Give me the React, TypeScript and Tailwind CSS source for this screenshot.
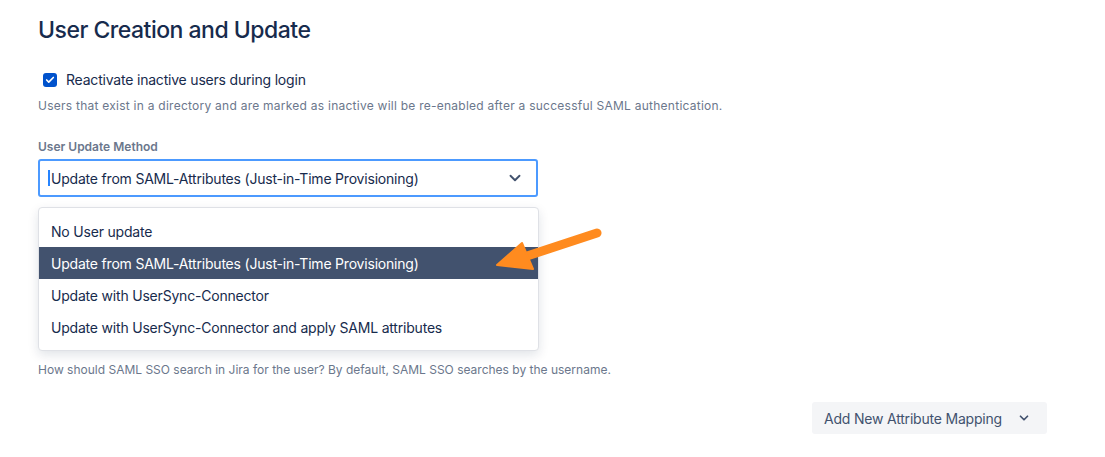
import { ChevronDown, Check } from "lucide-react";

const options = [
  "No User update",
  "Update from SAML-Attributes (Just-in-Time Provisioning)",
  "Update with UserSync-Connector",
  "Update with UserSync-Connector and apply SAML attributes",
];

export default function App() {
  const selected = 1;

  return (
    <div
      className="relative w-[1105px] h-[457px] bg-white text-[#172B4D] overflow-hidden"
      style={{ fontFamily: "Inter, 'Liberation Sans', sans-serif" }}
    >
      <div className="pl-[38px] pt-[15px]">
        <h1 className="text-[23px] leading-[30px] font-medium tracking-[-0.5px]">
          User Creation and Update
        </h1>

        <label className="mt-[25px] flex items-center h-[20px] pl-[5px]">
          <span className="w-[14px] h-[14px] rounded-[3px] bg-[#0052CC] flex items-center justify-center">
            <Check className="w-[10px] h-[10px] text-white" strokeWidth={4} />
          </span>
          <span className="ml-[9px] text-[14px] leading-[20px] tracking-[-0.2px]">
            Reactivate inactive users during login
          </span>
        </label>
        <p className="mt-[8px] text-[12px] leading-[16px] tracking-[0.25px] text-[#6B778C]">
          Users that exist in a directory and are marked as inactive will be re-enabled after a successful SAML
          authentication.
        </p>

        <div className="mt-[25px] text-[12px] leading-[16px] font-semibold text-[#6B778C]">
          User Update Method
        </div>
        <div className="mt-[4px] w-[500px] h-[38px] border-2 border-[#4C9AFF] rounded-[3px] flex items-center pl-[8px] pr-[12px]">
          <span className="w-[2px] h-[16px] bg-[#2684FF] mr-[1px]" />
          <span className="flex-1 text-[14px] tracking-[-0.2px]">{options[selected]}</span>
          <ChevronDown className="w-[18px] h-[18px] text-[#42526E]" strokeWidth={2.5} />
        </div>

        <div className="relative mt-[10px] h-[146px]">
          <div className="absolute left-0 top-0 w-[501px] bg-white border border-[#DFE1E6] rounded-[4px] shadow-[0_4px_11px_rgba(9,30,66,0.12)] py-[7px] z-10">
            {options.map((o, i) => (
              <div
                key={o}
                className={
                  "h-[32px] flex items-center pl-[12px] text-[14px] tracking-[-0.2px] " +
                  (i === selected ? "bg-[#42526E] text-white" : "text-[#172B4D]")
                }
              >
                {o}
              </div>
            ))}
          </div>
        </div>

        <p className="mt-[9px] text-[12px] leading-[16px] text-[#6B778C]">
          How should SAML SSO search in Jira for the user? By default, SAML SSO searches by the username.
        </p>

        <div className="mt-[24px] flex justify-end w-[1009px]">
          <button className="h-[32px] pl-[12px] pr-[16px] bg-[#F4F5F7] rounded-[3px] flex items-center text-[14px] tracking-[-0.2px] text-[#42526E]">
            Add New Attribute Mapping
            <ChevronDown className="ml-[15px] w-[14px] h-[14px]" strokeWidth={3} />
          </button>
        </div>
      </div>

      <svg className="absolute left-0 top-0 z-20 pointer-events-none" width="1105" height="457">
        <line x1="597" y1="233" x2="524" y2="257" stroke="#FF8B1F" strokeWidth="9" strokeLinecap="round" />
        <polygon points="497,265 522,243 533,269" fill="#FF8B1F" stroke="#FF8B1F" strokeWidth="2" strokeLinejoin="round" />
      </svg>
    </div>
  );
}
